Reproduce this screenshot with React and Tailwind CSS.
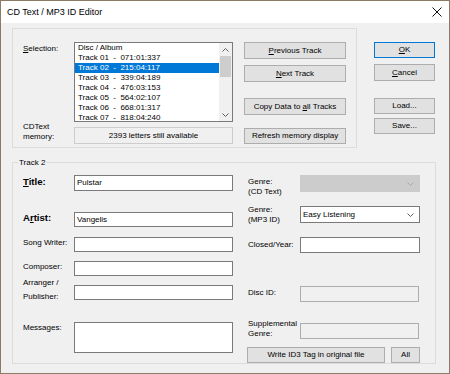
import React from 'react'

const tracks = [
  'Disc / Album',
  'Track 01  -  071:01:337',
  'Track 02  -  215:04:117',
  'Track 03  -  339:04:189',
  'Track 04  -  476:03:153',
  'Track 05  -  564:02:107',
  'Track 06  -  668:01:317',
  'Track 07  -  818:04:240',
]

const Chevron = ({ up, className }) => (
  <svg width="7" height="4" viewBox="0 0 7 4" className={className}>
    <path
      d={up ? 'M0.5 3.5 L3.5 0.5 L6.5 3.5' : 'M0.5 0.5 L3.5 3.5 L6.5 0.5'}
      fill="none"
      stroke="currentColor"
      strokeWidth="1"
    />
  </svg>
)

function Btn({ className, children }) {
  return (
    <div
      className={
        'flex items-center justify-center border bg-[#e1e1e1] text-[8px] leading-none text-black whitespace-nowrap ' +
        className
      }
    >
      {children}
    </div>
  )
}

function Field({ className, children }) {
  return (
    <div
      className={
        'flex items-center border border-[#7a7a7a] bg-white pl-[2px] text-[8px] leading-none ' +
        className
      }
    >
      {children}
    </div>
  )
}

export default function App() {
  return (
    <div className="flex h-[374px] w-[450px] flex-col border border-[#8b7b66] bg-[#f0f0f0] font-['Liberation_Sans',Arial,sans-serif] text-black">
      {/* title bar */}
      <div className="flex h-[22px] items-center justify-between bg-white pl-[6px] pr-[7px]">
        <span className="text-[9px] leading-none">CD Text / MP3 ID Editor</span>
        <svg width="10" height="10" viewBox="0 0 10 10">
          <path d="M0.5 0.5 L9.5 9.5 M9.5 0.5 L0.5 9.5" stroke="#111" strokeWidth="1" />
        </svg>
      </div>

      {/* top area */}
      <div className="ml-[11px] mt-[5px] flex">
        <div className="flex h-[120px] w-[345px] border border-[#dcdcdc] pl-[10px] pt-[13px]">
          <div className="flex w-[210px] flex-col">
            <div className="flex">
              <div className="mt-[2px] w-[51px] text-[8px] leading-[10px]">
                <u>S</u>election:
              </div>
              <div className="flex h-[80px] w-[159px] border border-[#7a7a7a] bg-white">
                <div className="flex flex-1 flex-col">
                  {tracks.map((t, i) => (
                    <div
                      key={t}
                      className={
                        'h-[10px] whitespace-pre pl-[3px] text-[8px] leading-[10px] ' +
                        (i === 2 ? 'bg-[#0078d7] text-white' : '')
                      }
                    >
                      {t}
                    </div>
                  ))}
                </div>
                <div className="flex w-[13px] flex-col items-center bg-[#f0f0f0]">
                  <div className="flex h-[13px] items-center justify-center text-[#606060]">
                    <Chevron up />
                  </div>
                  <div className="h-[21px] w-[11px] bg-[#cdcdcd]" />
                  <div className="flex-1" />
                  <div className="flex h-[13px] items-center justify-center text-[#606060]">
                    <Chevron />
                  </div>
                </div>
              </div>
            </div>
            <div className="flex">
              <div className="w-[51px] text-[8px] leading-[10px]">
                CDText
                <br />
                memory:
              </div>
              <div className="mt-[5px] flex h-[17px] w-[159px] items-center justify-center border border-[#cccccc] bg-[#f0f0f0] text-[8px] leading-none">
                2393 letters still available
              </div>
            </div>
          </div>
          <div className="ml-[11px] flex w-[102px] flex-col">
            <Btn className="h-[17px] border-[#adadad]">
              <span>
                <u>P</u>revious Track
              </span>
            </Btn>
            <Btn className="mt-[6px] h-[17px] border-[#adadad]">
              <span>
                <u>N</u>ext Track
              </span>
            </Btn>
            <Btn className="mt-[16px] h-[17px] border-[#adadad]">
              <span>
                Copy Data to <u>a</u>ll Tracks
              </span>
            </Btn>
            <Btn className="mt-[13px] h-[16px] border-[#adadad]">Refresh memory display</Btn>
          </div>
        </div>
        <div className="ml-[17px] flex w-[61px] flex-col pt-[14px]">
          <Btn className="h-[16px] border-[#0078d7]">
            <span>
              <u>O</u>K
            </span>
          </Btn>
          <Btn className="mt-[6px] h-[17px] border-[#adadad]">
            <span>
              <u>C</u>ancel
            </span>
          </Btn>
          <Btn className="mt-[17px] h-[16px] border-[#adadad]">Load...</Btn>
          <Btn className="mt-[4px] h-[16px] border-[#adadad]">Save...</Btn>
        </div>
      </div>

      {/* track group */}
      <div className="relative ml-[11px] mt-[14px] flex h-[202px] w-[424px] border border-[#dcdcdc] pl-[10px] pt-[12px]">
        <span className="absolute left-[5px] top-[-5px] bg-[#f0f0f0] px-[1px] text-[8px] leading-[9px]">
          Track 2
        </span>

        {/* left column */}
        <div className="flex w-[210px] flex-col">
          <div className="flex">
            <div className="mt-[2px] w-[51px] text-[9.6px] font-bold leading-[10px]">
              <u>T</u>itle:
            </div>
            <Field className="h-[16px] w-[159px]">Pulstar</Field>
          </div>
          <div className="mt-[21px] flex">
            <div className="mt-[1px] w-[51px] text-[9.6px] font-bold leading-[10px]">
              A<u>r</u>tist:
            </div>
            <Field className="h-[15px] w-[159px]">Vangelis</Field>
          </div>
          <div className="mt-[10px] flex">
            <div className="mt-[1px] w-[51px] text-[8px] leading-[10px]">Song Writer:</div>
            <Field className="h-[15px] w-[159px]" />
          </div>
          <div className="mt-[9px] flex">
            <div className="mt-[1px] w-[51px] text-[8px] leading-[10px]">Composer:</div>
            <Field className="h-[15px] w-[159px]" />
          </div>
          <div className="flex">
            <div className="w-[51px] text-[8px] leading-[14px]">
              Arranger /
              <br />
              Publisher:
            </div>
            <Field className="mt-[9px] h-[15px] w-[159px]" />
          </div>
          <div className="mt-[18px] flex">
            <div className="mt-[1px] w-[51px] text-[8px] leading-[10px]">Messages:</div>
            <Field className="h-[31px] w-[159px]" />
          </div>
        </div>

        {/* right column */}
        <div className="ml-[15px] flex w-[172px] flex-col">
          <div className="flex">
            <div className="mt-[2px] w-[52px] text-[8px] leading-[10px]">
              Genre:
              <br />
              (CD Text)
            </div>
            <div className="flex h-[17px] w-[120px] items-center justify-end bg-[#cccccc] pr-[6px] text-[#a8a8a8]">
              <Chevron />
            </div>
          </div>
          <div className="mt-[8px] flex">
            <div className="w-[52px] text-[8px] leading-[10px]">
              Genre:
              <br />
              (MP3 ID)
            </div>
            <div className="mt-[1px] flex h-[17px] w-[120px] items-center justify-between border border-[#7a7a7a] bg-white pl-[2px] pr-[5px] text-[8px] leading-none">
              <span>Easy Listening</span>
              <Chevron className="text-[#606060]" />
            </div>
          </div>
          <div className="mt-[12px] flex">
            <div className="mt-[3px] w-[52px] text-[8px] leading-[10px]">Closed/Year:</div>
            <Field className="h-[16px] w-[120px]" />
          </div>
          <div className="mt-[33px] flex">
            <div className="mt-[2px] w-[52px] text-[8px] leading-[10px]">Disc ID:</div>
            <div className="h-[16px] w-[119px] border border-[#adadad] bg-[#f0f0f0]" />
          </div>
          <div className="mt-[17px] flex">
            <div className="w-[52px] text-[8px] leading-[10px]">
              Supplemental
              <br />
              Genre:
            </div>
            <div className="mt-[4px] h-[16px] w-[119px] border border-[#adadad] bg-[#f0f0f0]" />
          </div>
          <div className="-ml-[1px] mt-[8px] flex">
            <Btn className="h-[16px] w-[148px] border-[#adadad]">Write ID3 Tag in original file</Btn>
            <Btn className="ml-[6px] h-[16px] w-[31px] border-[#adadad]">All</Btn>
          </div>
        </div>
      </div>
    </div>
  )
}
